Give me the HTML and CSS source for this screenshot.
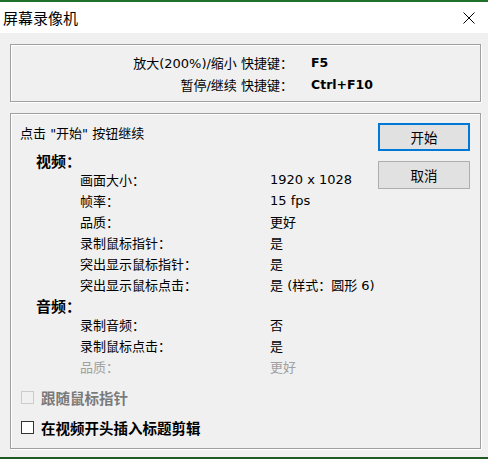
FILE: index.html
```html
<!DOCTYPE html>
<html lang="zh-CN">

<head>
    <meta charset="UTF-8">
    <meta name="viewport" content="width=device-width, initial-scale=1.0">
    <title>屏幕录像机</title>
    <link rel="stylesheet" href="styles.css">
</head>

<body>
    <div class="window">
        <div class="titlebar">
            <span class="title">屏幕录像机</span>
            <span class="close" aria-label="关闭">
                <svg width="12" height="12" viewBox="0 0 12 12">
                    <line x1="0.5" y1="0.5" x2="11.5" y2="11.5" stroke="#000" stroke-width="1" />
                    <line x1="11.5" y1="0.5" x2="0.5" y2="11.5" stroke="#000" stroke-width="1" />
                </svg>
            </span>
        </div>

        <div class="content">
            <!-- Hotkeys -->
            <div class="group hotkeys">
                <span class="hk-label">放大(200%)/缩小 快捷键：</span>
                <span class="hk-key">F5</span>
                <span class="hk-label">暂停/继续 快捷键：</span>
                <span class="hk-key">Ctrl+F10</span>
            </div>

            <!-- Settings summary -->
            <div class="group summary">
                <div class="summary-main">
                    <div class="intro">点击 &quot;开始&quot; 按钮继续</div>

                    <div class="section">视频：</div>
                    <div class="rows">
                        <span>画面大小：</span><span>1920 x 1028</span>
                        <span>帧率：</span><span>15 fps</span>
                        <span>品质：</span><span>更好</span>
                        <span>录制鼠标指针：</span><span>是</span>
                        <span>突出显示鼠标指针：</span><span>是</span>
                        <span>突出显示鼠标点击：</span><span>是 (样式：圆形 6)</span>
                    </div>

                    <div class="section audio">音频：</div>
                    <div class="rows">
                        <span>录制音频：</span><span>否</span>
                        <span>录制鼠标点击：</span><span>是</span>
                        <span class="disabled">品质：</span><span class="disabled">更好</span>
                    </div>

                    <div class="options">
                        <label class="option disabled">
                            <input type="checkbox" class="check" disabled>
                            <span>跟随鼠标指针</span>
                        </label>
                        <label class="option">
                            <input type="checkbox" class="check">
                            <span>在视频开头插入标题剪辑</span>
                        </label>
                    </div>
                </div>

                <div class="buttons">
                    <button class="btn btn-default">开始</button>
                    <button class="btn">取消</button>
                </div>
            </div>
        </div>

        <div class="bottom-edge"></div>
    </div>
</body>

</html>
```

FILE: styles.css
```css
* {
    margin: 0;
    padding: 0;
    box-sizing: border-box;
}

body {
    background: #f0f0f0;
    font-family: "DejaVu Sans", "Noto Sans CJK SC", sans-serif;
    font-size: 13px;
    color: #000;
}

.window {
    height: 459px;
    display: flex;
    flex-direction: column;
}

.titlebar {
    height: 33px;
    background: #fff;
    border-top: 2px solid #21702a;
    display: flex;
    align-items: center;
    justify-content: space-between;
    padding: 0 13px 0 3px;
}

.title {
    font-family: "Noto Sans CJK SC", sans-serif;
    font-size: 15px;
    line-height: 20px;
    margin-top: 1px;
}

.close {
    display: flex;
    margin-top: 1px;
}

.content {
    flex: 1;
    padding: 11px 0 0 10px;
}

.group {
    width: 471px;
    border: 1px solid #a0a0a0;
    box-shadow: 1px 1px 0 #fff, inset 1px 1px 0 #fff;
}

.hotkeys {
    display: grid;
    grid-template-columns: 282px auto;
    column-gap: 18px;
    grid-auto-rows: 22px;
    align-items: center;
    padding: 6px 0 6px;
}

.hk-label {
    text-align: right;
}

.hk-key {
    font-weight: bold;
    font-size: 12.5px;
}

.summary {
    margin-top: 11px;
    height: 336px;
    display: flex;
    padding: 9px 10px 0 9px;
}

.summary-main {
    flex: 1;
    white-space: nowrap;
}

.intro {
    line-height: 22px;
    margin-bottom: 7px;
}

.section {
    font-family: "Noto Sans CJK SC", sans-serif;
    font-weight: bold;
    font-size: 15px;
    line-height: 17px;
    padding-left: 16px;
}

.section.audio {
    margin-top: 2px;
}

.rows {
    display: grid;
    grid-template-columns: 190px auto;
    grid-auto-rows: 21px;
    align-items: center;
    padding-left: 60px;
}

.disabled {
    color: #a0a0a0;
}

.options {
    margin-top: 5px;
}

.option {
    display: flex;
    align-items: center;
    height: 30px;
    gap: 7px;
    padding-left: 1px;
    font-family: "Noto Sans CJK SC", sans-serif;
    font-weight: bold;
    font-size: 14.5px;
}

.option.disabled {
    color: #7a7a7a;
}

.check {
    appearance: none;
    width: 13px;
    height: 13px;
    margin: 0;
    border: 1px solid #333;
    background: #fff;
}

.check:disabled {
    border-color: #cccccc;
    background: #f0f0f0;
}

.buttons {
    width: 92px;
    display: flex;
    flex-direction: column;
    gap: 10px;
}

.btn {
    height: 28px;
    background: #e1e1e1;
    border: 1px solid #adadad;
    font-family: "Noto Sans CJK SC", sans-serif;
    font-size: 13.5px;
    color: #000;
}

.btn-default {
    border: 2px solid #0078d7;
}

.bottom-edge {
    height: 2px;
    background: #1f5a24;
}
```
